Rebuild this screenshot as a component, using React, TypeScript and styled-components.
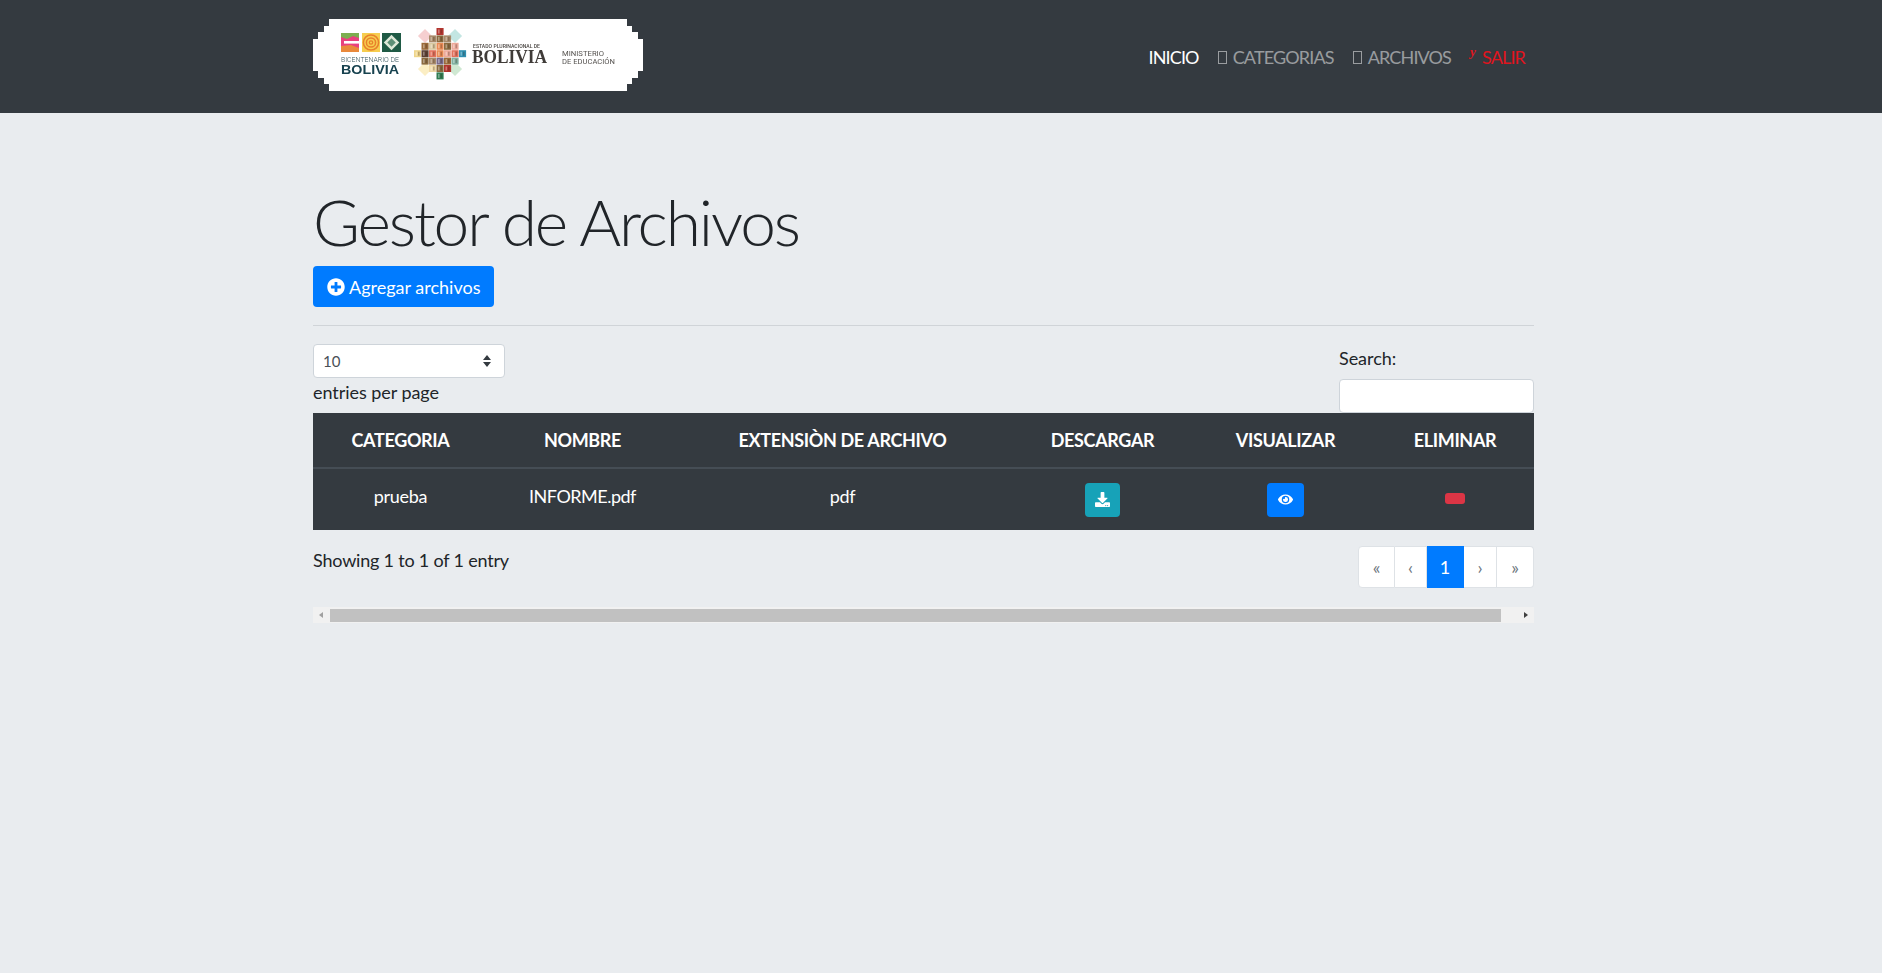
import React from 'react';
import styled, { createGlobalStyle } from 'styled-components';
import { FaDownload, FaEye, FaPlusCircle } from 'react-icons/fa';

const Global = createGlobalStyle`
  html, body { margin: 0; padding: 0; background: #e9ecef; }
  body { font-family: Lato, "Open Sans", sans-serif; color: #212529; font-size: 16px; min-height: 973px; }
`;

const Header = styled.header`
  background: #343a40;
  height: 113px;
  display: flex;
  align-items: flex-start;
  justify-content: space-between;
  padding: 19px 349px 0 313px;
  box-sizing: border-box;
`;
const Logo = styled.svg`
  width: 330px;
  height: 72px;
  display: block;
  flex: none;
  filter: blur(0.4px);
`;
const Nav = styled.nav`
  display: flex;
  align-items: center;
  height: 76px;
`;
const NavLink = styled.a<{ $tone: 'active' | 'muted' | 'danger' }>`
  display: flex;
  align-items: center;
  gap: 6px;
  padding: 0 8px;
  margin-left: 3px;
  font-size: 18px;
  letter-spacing: -0.85px;
  color: ${p => (p.$tone === 'active' ? '#fff' : p.$tone === 'danger' ? '#e0141e' : 'rgba(255,255,255,.5)')};
`;
const Tofu = styled.span`
  width: 7px;
  height: 11px;
  border: 1.5px solid rgba(255, 255, 255, 0.5);
`;
const ExitGlyph = styled.span`
  font-family: "Liberation Serif", serif;
  font-style: italic;
  font-weight: 700;
  font-size: 13px;
  position: relative;
  top: -5px;
  margin-right: 1px;
`;
const Main = styled.main`
  width: 1221px;
  margin-left: 313px;
  padding-top: 70px;
`;
const Title = styled.h1`
  margin: 0 0 6px;
  font-size: 64px;
  line-height: 77px;
  font-weight: 300;
  letter-spacing: -2.1px;
`;
const AddButton = styled.button`
  display: inline-flex;
  align-items: center;
  gap: 4px;
  height: 41px;
  width: 181px;
  padding: 0 0 0 14px;
  border: 0;
  border-radius: 4px;
  background: #007bff;
  color: #fff;
  font: 400 18px Lato, sans-serif;
  box-sizing: border-box;
  vertical-align: top;
  svg { width: 18px; height: 18px; }
`;
const Rule = styled.hr`
  border: 0;
  height: 1px;
  background: #d0d4d8;
  margin: 18px 0;
`;
const Toolbar = styled.div`
  display: flex;
  justify-content: space-between;
  align-items: flex-start;
  height: 69px;
`;
const LeftTool = styled.div`
  width: 193px;
`;
const SelectBox = styled.div`
  width: 192px;
  height: 34px;
  box-sizing: border-box;
  padding: 0 12px 0 9px;
  border: 1px solid #ced4da;
  border-radius: 4px;
  background: #fff;
  color: #495057;
  display: flex;
  align-items: center;
  justify-content: space-between;
  font-size: 15px;
`;
const Chevrons = styled.svg`
  width: 10px;
  height: 14px;
`;
const ToolLabel = styled.div`
  font-size: 18px;
  line-height: 24px;
  letter-spacing: -0.05px;
`;
const EntriesLabel = styled(ToolLabel)`
  margin-top: 2px;
`;
const RightTool = styled.div`
  width: 195px;
  margin-top: 2px;
`;
const SearchInput = styled.input`
  display: block;
  width: 195px;
  height: 34px;
  margin-top: 9px;
  box-sizing: border-box;
  border: 1px solid #ced4da;
  border-radius: 4px;
  background: #fff;
`;
const Table = styled.table`
  width: 1221px;
  table-layout: fixed;
  border-collapse: collapse;
  background: #343a40;
  color: #fff;
  font-size: 18px;
  text-align: center;
  th { height: 55px; padding: 0; font-weight: 700; border-bottom: 2px solid #454d55; box-sizing: border-box; letter-spacing: -0.35px; }
  td { height: 62px; padding: 0 0 7px; box-sizing: border-box; letter-spacing: -0.3px; }
  th:last-child, td:last-child { padding-left: 2px; }
`;
const NameText = styled.span`
  letter-spacing: -0.5px;
`;
const ActionCell = styled.div`
  display: flex;
  justify-content: center;
  padding-top: 7px;
`;
const IconButton = styled.button<{ $bg: string; $w: number }>`
  width: ${p => p.$w}px;
  height: 34px;
  border: 0;
  padding: 0;
  border-radius: 4px;
  background: ${p => p.$bg};
  color: #fff;
  display: flex;
  align-items: center;
  justify-content: center;
  svg { width: 15px; height: 15px; }
`;
const DeleteButton = styled.button`
  width: 20px;
  height: 11px;
  margin-top: -2px;
  padding: 0;
  border: 0;
  border-radius: 3px;
  background: #dc3545;
`;
const Footer = styled.div`
  display: flex;
  justify-content: space-between;
  align-items: flex-start;
  margin-top: 16px;
`;
const Info = styled.div`
  font-size: 18px;
  line-height: 24px;
  letter-spacing: -0.2px;
  padding-top: 2px;
`;
const Pagination = styled.ul`
  display: flex;
  list-style: none;
  margin: 0;
  padding: 0;
  height: 42px;
`;
const PageItem = styled.li<{ $active?: boolean; $w: number; $pos?: 'first' | 'last' }>`
  width: ${p => p.$w}px;
  box-sizing: border-box;
  display: flex;
  align-items: center;
  justify-content: center;
  background: ${p => (p.$active ? '#007bff' : '#fff')};
  color: ${p => (p.$active ? '#fff' : '#6c757d')};
  font-size: 18px;
  border: 1px solid ${p => (p.$active ? '#007bff' : '#dee2e6')};
  border-left-width: ${p => (p.$pos === 'first' ? 1 : 0)}px;
  border-radius: ${p => (p.$pos === 'first' ? '4px 0 0 4px' : p.$pos === 'last' ? '0 4px 4px 0' : '0')};
`;
const Scrollbar = styled.div`
  height: 16px;
  margin-top: 19px;
  background: #f1f1f1;
  display: flex;
  align-items: center;
`;
const ScrollArrow = styled.svg`
  width: 16px;
  height: 16px;
  flex: none;
`;
const ScrollThumb = styled.div`
  width: 1172px;
  height: 13px;
  margin: 1px 17px 0 1px;
  background: #c1c1c1;
`;

const C: Record<string, string> = {
  r: '#b3352f', m: '#a88a6a', b: '#8a6a3f', o: '#e98a54', y: '#efd58a', d: '#5b4034',
  e: '#e2705c', k: '#eda99a', u: '#2f8fb0', g: '#2f7d52', l: '#d9c8a0', v: '#7a6a8a', s: '#7fb0a0', n: '#9a6a3a', w: '#f0d9a6',
};
const chakana = ['...r...', '..mbm..', '.nlobk.', 'ydeokeu', '.bmvns.', '..wbr..', '...g...'];
const diamonds: [number, number, string][] = [
  [112, 17, '#f6cfd0'],
  [142, 17, '#c3e6e2'],
  [112, 50, '#fbeec4'],
  [142, 50, '#cfe8d2'],
];

function BoliviaLogo() {
  return (
    <Logo viewBox="0 0 330 72" role="img" aria-label="Bolivia">
      <polygon
        fill="#fff"
        points="16,0 314,0 314,7 319,7 319,13 325,13 325,20 330,20 330,52 325,52 325,59 319,59 319,65 314,65 314,72 16,72 16,65 11,65 11,59 5,59 5,52 0,52 0,20 5,20 5,13 11,13 11,7 16,7"
      />
      <g>
        <rect x="28" y="14" width="18" height="19" fill="#e8417e" />
        <path d="M28 14 H46 V19 L40 17 L34 20 L28 18 Z" fill="#7cae4f" />
        <path d="M28 27 L38 26 L46 29 V33 H28 Z" fill="#e9893b" />
        <rect x="31" y="22" width="15" height="2.6" fill="#fff" />
        <rect x="49" y="14" width="18" height="19" fill="#f6cd4f" />
        <circle cx="58" cy="23.5" r="7.6" fill="none" stroke="#e8802b" strokeWidth="1.5" />
        <circle cx="58" cy="23.5" r="4.6" fill="none" stroke="#e8802b" strokeWidth="1.5" />
        <circle cx="58" cy="23.5" r="1.7" fill="none" stroke="#e8802b" strokeWidth="1.3" />
        <rect x="69" y="14" width="19" height="19" fill="#1f5a45" />
        <rect x="73" y="18" width="11" height="11" fill="#dfe9d8" transform="rotate(45 78.5 23.5)" />
        <rect x="75.5" y="20.5" width="6" height="6" fill="#5d8f76" transform="rotate(45 78.5 23.5)" />
      </g>
      <text x="28" y="43" fontFamily="Roboto, sans-serif" fontWeight="300" fontSize="7.4" fill="#33525a" textLength="58" lengthAdjust="spacingAndGlyphs">BICENTENARIO DE</text>
      <text x="28" y="54.5" fontFamily="'Liberation Sans', sans-serif" fontWeight="700" fontSize="13.5" fill="#17424f" textLength="58" lengthAdjust="spacingAndGlyphs">BOLIVIA</text>
      <g>
        {diamonds.map(([x, y, f]) => (
          <rect key={`${x}-${y}`} x={x - 5} y={y - 5} width="10" height="10" fill={f} transform={`rotate(45 ${x} ${y})`} />
        ))}
        {chakana.flatMap((row, y) =>
          row.split('').map((c, x) =>
            c === '.' ? null : (
              <g key={`${x}-${y}`}>
                <rect x={101 + x * 7.5} y={9 + y * 7.4} width="7.1" height="7" fill={C[c]} />
                <rect x={102.5 + x * 7.5} y={10.5 + y * 7.4} width="1.6" height="4" fill="#fff" opacity="0.35" />
                <rect x={105 + x * 7.5} y={10.5 + y * 7.4} width="1.6" height="4" fill="#3a2a22" opacity="0.3" />
              </g>
            ),
          ),
        )}
      </g>
      <text x="160" y="29" fontFamily="Roboto, sans-serif" fontWeight="500" fontSize="5" fill="#4a4642" textLength="67" lengthAdjust="spacingAndGlyphs">ESTADO PLURINACIONAL DE</text>
      <text x="159" y="44" fontFamily="'Liberation Serif', serif" fontWeight="700" fontSize="18.5" fill="#3f3b38" textLength="75" lengthAdjust="spacingAndGlyphs">BOLIVIA</text>
      <text x="249" y="37" fontFamily="Roboto, sans-serif" fontWeight="400" fontSize="6.6" fill="#55524f" textLength="42" lengthAdjust="spacingAndGlyphs">MINISTERIO</text>
      <text x="249" y="44.5" fontFamily="Roboto, sans-serif" fontWeight="400" fontSize="6.6" fill="#55524f" textLength="53" lengthAdjust="spacingAndGlyphs">DE EDUCACIÓN</text>
    </Logo>
  );
}

export default function App() {
  return (
    <>
      <Global />
      <Header>
        <BoliviaLogo />
        <Nav>
          <NavLink $tone="active">INICIO</NavLink>
          <NavLink $tone="muted"><Tofu />CATEGORIAS</NavLink>
          <NavLink $tone="muted"><Tofu />ARCHIVOS</NavLink>
          <NavLink $tone="danger"><ExitGlyph>y</ExitGlyph>SALIR</NavLink>
        </Nav>
      </Header>
      <Main>
        <Title>Gestor de Archivos</Title>
        <AddButton><FaPlusCircle />Agregar archivos</AddButton>
        <Rule />
        <Toolbar>
          <LeftTool>
            <SelectBox>
              10
              <Chevrons viewBox="0 0 10 14">
                <path d="M5 1 L9 6 H1 Z M5 13 L1 8 H9 Z" fill="#343a40" />
              </Chevrons>
            </SelectBox>
            <EntriesLabel>entries per page</EntriesLabel>
          </LeftTool>
          <RightTool>
            <ToolLabel>Search:</ToolLabel>
            <SearchInput />
          </RightTool>
        </Toolbar>
        <Table>
          <colgroup>
            <col width="175" />
            <col width="189" />
            <col width="331" />
            <col width="189" />
            <col width="177" />
            <col width="160" />
          </colgroup>
          <thead>
            <tr>
              <th>CATEGORIA</th>
              <th>NOMBRE</th>
              <th>EXTENSIÒN DE ARCHIVO</th>
              <th>DESCARGAR</th>
              <th>VISUALIZAR</th>
              <th>ELIMINAR</th>
            </tr>
          </thead>
          <tbody>
            <tr>
              <td>prueba</td>
              <td><NameText>INFORME.pdf</NameText></td>
              <td>pdf</td>
              <td><ActionCell><IconButton $bg="#17a2b8" $w={35}><FaDownload /></IconButton></ActionCell></td>
              <td><ActionCell><IconButton $bg="#007bff" $w={37}><FaEye /></IconButton></ActionCell></td>
              <td><ActionCell><DeleteButton /></ActionCell></td>
            </tr>
          </tbody>
        </Table>
        <Footer>
          <Info>Showing 1 to 1 of 1 entry</Info>
          <Pagination>
            <PageItem $w={37} $pos="first">«</PageItem>
            <PageItem $w={32}>‹</PageItem>
            <PageItem $w={37} $active>1</PageItem>
            <PageItem $w={33}>›</PageItem>
            <PageItem $w={37} $pos="last">»</PageItem>
          </Pagination>
        </Footer>
        <Scrollbar>
          <ScrollArrow viewBox="0 0 16 16"><path d="M10 5 V11 L6 8 Z" fill="#a0a0a0" /></ScrollArrow>
          <ScrollThumb />
          <ScrollArrow viewBox="0 0 16 16"><path d="M6 5 V11 L10 8 Z" fill="#404040" /></ScrollArrow>
        </Scrollbar>
      </Main>
    </>
  );
}
